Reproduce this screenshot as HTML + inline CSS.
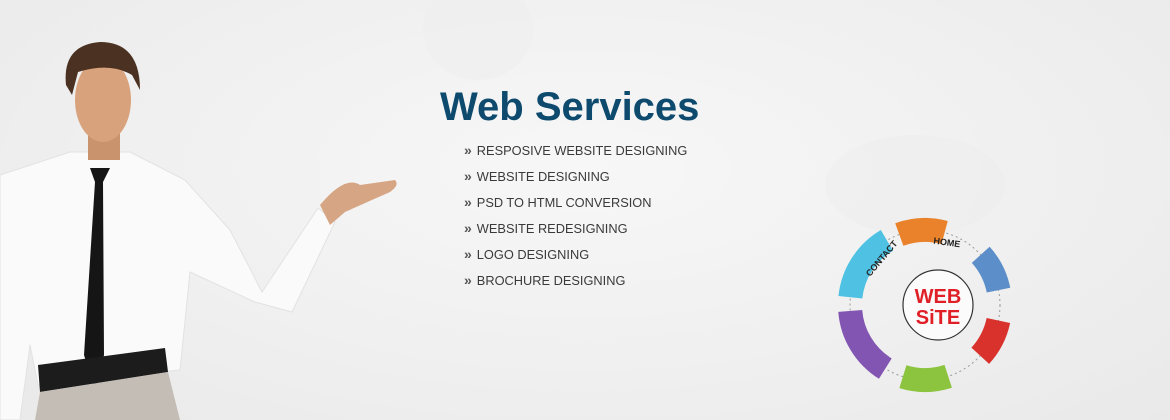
<!DOCTYPE html>
<html><head><meta charset="utf-8"><style>
html,body{margin:0;padding:0}
body{width:1170px;height:420px;overflow:hidden;position:relative;background:radial-gradient(ellipse at 50% 40%,#f7f7f7 0%,#efefef 60%,#e9e9e9 100%);font-family:"Liberation Sans",sans-serif}
h1{position:absolute;left:440px;top:85px;margin:0;font-size:40px;font-weight:bold;color:#0d4a6d;font-family:"Liberation Sans",sans-serif}
ul{position:absolute;left:464px;top:141px;margin:0;padding:0;list-style:none}
li{height:26px;line-height:18px;font-size:12.8px;color:#3a3a3a;white-space:nowrap}
li:before{content:"\00bb";color:#555;font-weight:bold;margin-right:5px;font-size:14px}
svg{position:absolute;left:0;top:0}
</style></head><body>
<svg width="1170" height="420">
 <ellipse cx="478" cy="30" rx="55" ry="50" fill="#ededed" opacity="0.45"/>
 <ellipse cx="915" cy="185" rx="90" ry="50" fill="#ececec" opacity="0.35"/>
 <path d="M0 175 L70 152 L130 152 L185 180 L230 230 L262 292 L318 208 L335 222 L292 312 L255 302 L190 272 L180 370 L38 385 L30 345 L20 420 L0 420Z" fill="#fafafa" stroke="#e2e2e2"/>
 <path d="M320 205 Q345 175 360 185 L395 180 Q400 185 390 192 L345 212 L330 225Z" fill="#d6a583"/>
 <rect x="88" y="128" width="32" height="32" fill="#c9936e"/>
 <ellipse cx="103" cy="100" rx="28" ry="42" fill="#d8a27c"/>
 <path d="M66 85 Q62 45 100 42 Q140 42 140 90 L132 75 Q110 62 78 72 L72 95Z" fill="#4a3122"/>
 <path d="M90 168 L110 168 L103 182 L104 355 L95 390 L84 355 L95 182Z" fill="#151515"/>
 <path d="M38 365 L165 348 L168 372 L40 392Z" fill="#1c1c1c"/>
 <path d="M40 392 L168 372 L180 420 L35 420Z" fill="#c3bdb5"/>
 <g transform="translate(925,305)" fill="none">
  <circle r="75" stroke="#999" stroke-width="1" stroke-dasharray="2 3"/>
  <circle r="75" stroke="#e9822b" stroke-width="24" stroke-dasharray="46 425" transform="rotate(-110)"/>
  <circle r="75" stroke="#5c8fc9" stroke-width="24" stroke-dasharray="40 431" transform="rotate(-42)"/>
  <circle r="75" stroke="#d9312c" stroke-width="24" stroke-dasharray="40 431" transform="rotate(12)"/>
  <circle r="75" stroke="#8cc43f" stroke-width="24" stroke-dasharray="46 425" transform="rotate(72)"/>
  <circle r="75" stroke="#8255b2" stroke-width="24" stroke-dasharray="70 401" transform="rotate(122)"/>
  <circle r="75" stroke="#4fc2e3" stroke-width="24" stroke-dasharray="70 401" transform="rotate(186)"/>
  <circle cx="13" cy="0" r="35" fill="#fbfbfb" stroke="#333" stroke-width="1.2"/>
  <text x="13" y="-2" text-anchor="middle" font-family="Liberation Sans" font-weight="bold" font-size="20" fill="#e01f26" stroke="none">WEB</text>
  <text x="13" y="19" text-anchor="middle" font-family="Liberation Sans" font-weight="bold" font-size="20" fill="#e01f26" stroke="none">SiTE</text>
  <text x="13" y="-62" text-anchor="middle" font-size="9" font-weight="bold" fill="#222" stroke="none" transform="rotate(8)">HOME</text>
  <text x="-55" y="-28" font-size="9" font-weight="bold" fill="#222" stroke="none" transform="rotate(-50 -55 -28)">CONTACT</text>
 </g>
</svg>
<h1>Web Services</h1>
<ul>
<li>RESPOSIVE WEBSITE DESIGNING</li>
<li>WEBSITE DESIGNING</li>
<li>PSD TO HTML CONVERSION</li>
<li>WEBSITE REDESIGNING</li>
<li>LOGO DESIGNING</li>
<li>BROCHURE DESIGNING</li>
</ul>
</body></html>
